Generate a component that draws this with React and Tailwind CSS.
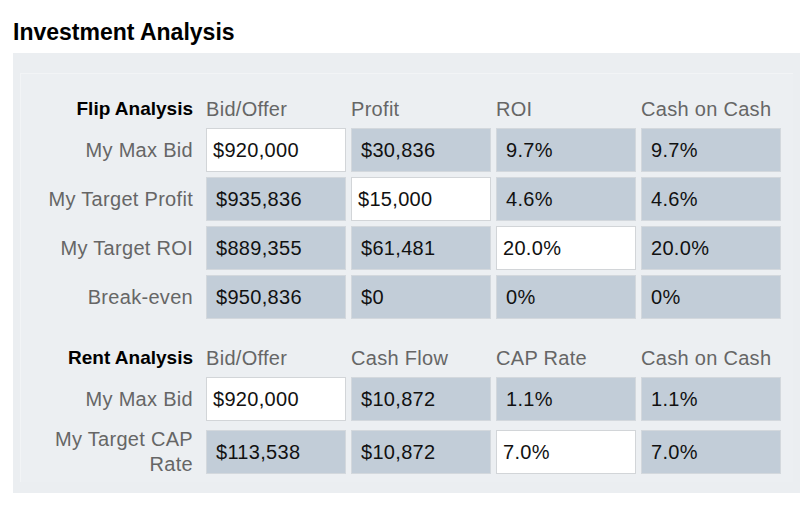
import React from "react";

const font = { fontFamily: '"Liberation Sans", Arial, sans-serif' };

function Cell({ value, input }) {
  if (input) {
    return (
      <div className="h-[44px] w-[140px] border border-[#d2d5d8] bg-white pl-[6px] flex items-center text-[20px] tracking-[0.3px] text-[#111]">
        {value}
      </div>
    );
  }
  return (
    <div className="h-[44px] w-[140px] border border-[#d3d8dd] bg-[#c2cdd8] pl-[9px] flex items-center text-[20px] tracking-[0.3px] text-[#111]">
      {value}
    </div>
  );
}

function Header({ title, cols }) {
  return (
    <div className="flex items-center h-[24px]">
      <div className="w-[180px] pr-[8px] text-right font-bold text-[19px] text-black">{title}</div>
      <div className="flex gap-[5px] ml-[5px]">
        {cols.map((c, i) => (
          <div key={i} className="w-[140px] text-[20px] tracking-[0.3px] text-[#666]">{c}</div>
        ))}
      </div>
    </div>
  );
}

function Row({ label, cells, tall }) {
  return (
    <div className={"flex items-center " + (tall ? "h-[52px]" : "h-[44px]")}>
      <div className="w-[180px] pr-[8px] text-right text-[20px] tracking-[0.3px] leading-[25px] text-[#666]">{label}</div>
      <div className="flex gap-[5px] ml-[5px]">
        {cells.map((c, i) => (
          <Cell key={i} value={c.v} input={c.i} />
        ))}
      </div>
    </div>
  );
}

export default function App() {
  return (
    <div className="w-[800px] h-[514px] bg-white" style={font}>
      <div className="pl-[13px] pt-[18px] h-[53px]">
        <h1 className="text-[23px] font-bold text-black leading-[28px]">Investment Analysis</h1>
      </div>
      <div className="ml-[13px] w-[787px] bg-[#ebeef1] pt-[20px] px-[7px] pb-[11px]">
        <div className="bg-[#eceff2] border-t border-l border-[#f2f4f6] pt-[23px] pb-[4px]">
          <Header title="Flip Analysis" cols={["Bid/Offer", "Profit", "ROI", "Cash on Cash"]} />
          <div className="flex flex-col gap-[5px] mt-[7px]">
            <Row label="My Max Bid" cells={[{ v: "$920,000", i: true }, { v: "$30,836" }, { v: "9.7%" }, { v: "9.7%" }]} />
            <Row label="My Target Profit" cells={[{ v: "$935,836" }, { v: "$15,000", i: true }, { v: "4.6%" }, { v: "4.6%" }]} />
            <Row label="My Target ROI" cells={[{ v: "$889,355" }, { v: "$61,481" }, { v: "20.0%", i: true }, { v: "20.0%" }]} />
            <Row label="Break-even" cells={[{ v: "$950,836" }, { v: "$0" }, { v: "0%" }, { v: "0%" }]} />
          </div>
          <div className="mt-[27px]">
            <Header title="Rent Analysis" cols={["Bid/Offer", "Cash Flow", "CAP Rate", "Cash on Cash"]} />
          </div>
          <div className="flex flex-col gap-[5px] mt-[7px]">
            <Row label="My Max Bid" cells={[{ v: "$920,000", i: true }, { v: "$10,872" }, { v: "1.1%" }, { v: "1.1%" }]} />
            <Row tall label={<>My Target CAP<br />Rate</>} cells={[{ v: "$113,538" }, { v: "$10,872" }, { v: "7.0%", i: true }, { v: "7.0%" }]} />
          </div>
        </div>
      </div>
    </div>
  );
}
